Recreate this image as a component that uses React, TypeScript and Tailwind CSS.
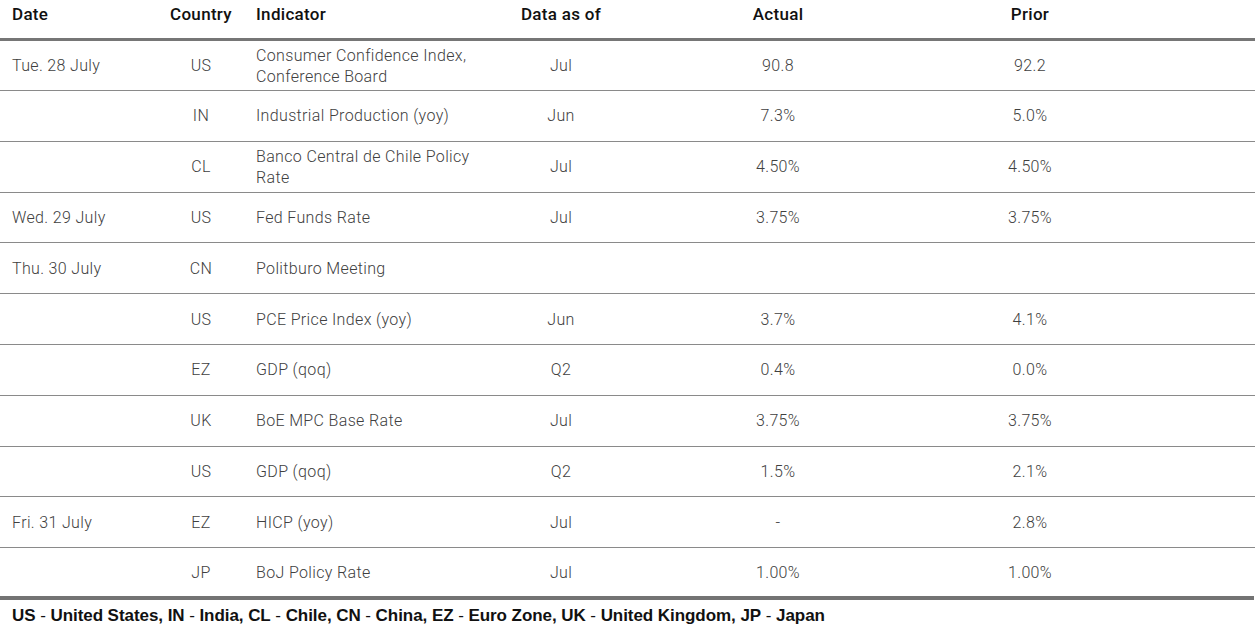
import React from "react";

type Row = {
  date?: string;
  country: string;
  indicator: string[];
  asOf: string;
  actual: string;
  prior: string;
};

const rows: Row[] = [
  { date: "Tue. 28 July", country: "US", indicator: ["Consumer Confidence Index,", "Conference Board"], asOf: "Jul", actual: "90.8", prior: "92.2" },
  { country: "IN", indicator: ["Industrial Production (yoy)"], asOf: "Jun", actual: "7.3%", prior: "5.0%" },
  { country: "CL", indicator: ["Banco Central de Chile Policy", "Rate"], asOf: "Jul", actual: "4.50%", prior: "4.50%" },
  { date: "Wed. 29 July", country: "US", indicator: ["Fed Funds Rate"], asOf: "Jul", actual: "3.75%", prior: "3.75%" },
  { date: "Thu. 30 July", country: "CN", indicator: ["Politburo Meeting"], asOf: "", actual: "", prior: "" },
  { country: "US", indicator: ["PCE Price Index (yoy)"], asOf: "Jun", actual: "3.7%", prior: "4.1%" },
  { country: "EZ", indicator: ["GDP (qoq)"], asOf: "Q2", actual: "0.4%", prior: "0.0%" },
  { country: "UK", indicator: ["BoE MPC Base Rate"], asOf: "Jul", actual: "3.75%", prior: "3.75%" },
  { country: "US", indicator: ["GDP (qoq)"], asOf: "Q2", actual: "1.5%", prior: "2.1%" },
  { date: "Fri. 31 July", country: "EZ", indicator: ["HICP (yoy)"], asOf: "Jul", actual: "-", prior: "2.8%" },
  { country: "JP", indicator: ["BoJ Policy Rate"], asOf: "Jul", actual: "1.00%", prior: "1.00%" },
];

const legend: [string, string][] = [
  ["US", "United States"],
  ["IN", "India"],
  ["CL", "Chile"],
  ["CN", "China"],
  ["EZ", "Euro Zone"],
  ["UK", "United Kingdom"],
  ["JP", "Japan"],
];

const cols = "grid grid-cols-[166px_70px_244px_162px_272px_232px_1fr]";

export default function App() {
  return (
    <div className="w-[1255px] h-[637px] bg-white font-['Roboto',sans-serif]">
      <div className={`${cols} h-[41px] pt-[4px] text-[17px] tracking-[0.3px] leading-[20px] text-[#111] font-medium border-b-[3px] border-[#767676]`}>
        <div className="pl-[12px]">Date</div>
        <div className="text-center">Country</div>
        <div className="pl-[20px]">Indicator</div>
        <div className="text-center">Data as of</div>
        <div className="text-center">Actual</div>
        <div className="text-center">Prior</div>
        <div />
      </div>

      {rows.map((r, i) => {
        const last = i === rows.length - 1;
        return (
          <div
            key={i}
            className={`${cols} items-center font-light text-[16px] tracking-[0.35px] text-[#404040] leading-[21px] ${
              last ? "h-[47.8px]" : i === 0 ? "h-[50px] border-b border-[#8a8a8a]" : "h-[50.8px] border-b border-[#8a8a8a]"
            }`}
          >
            <div className="pl-[12px]">{r.date}</div>
            <div className="text-center">{r.country}</div>
            <div className="pl-[20px]">
              {r.indicator.map((l, j) => (
                <div key={j}>{l}</div>
              ))}
            </div>
            <div className="text-center">{r.asOf}</div>
            <div className="text-center">{r.actual}</div>
            <div className="text-center">{r.prior}</div>
            <div />
          </div>
        );
      })}

      <div className="h-[4px] w-[1254px] bg-[#737373]" />

      <div className="pl-[12px] pt-[6px] text-[17px] tracking-[-0.06px] font-['Liberation_Sans',sans-serif] text-[#111] leading-[20px]">
        {legend.map(([code, name], i) => (
          <span key={code}>
            <span className="font-bold">{code}</span>
            <span className="font-normal"> - </span>
            <span className="font-bold">{name}</span>
            {i < legend.length - 1 && <span className="font-bold">, </span>}
          </span>
        ))}
      </div>
    </div>
  );
}
